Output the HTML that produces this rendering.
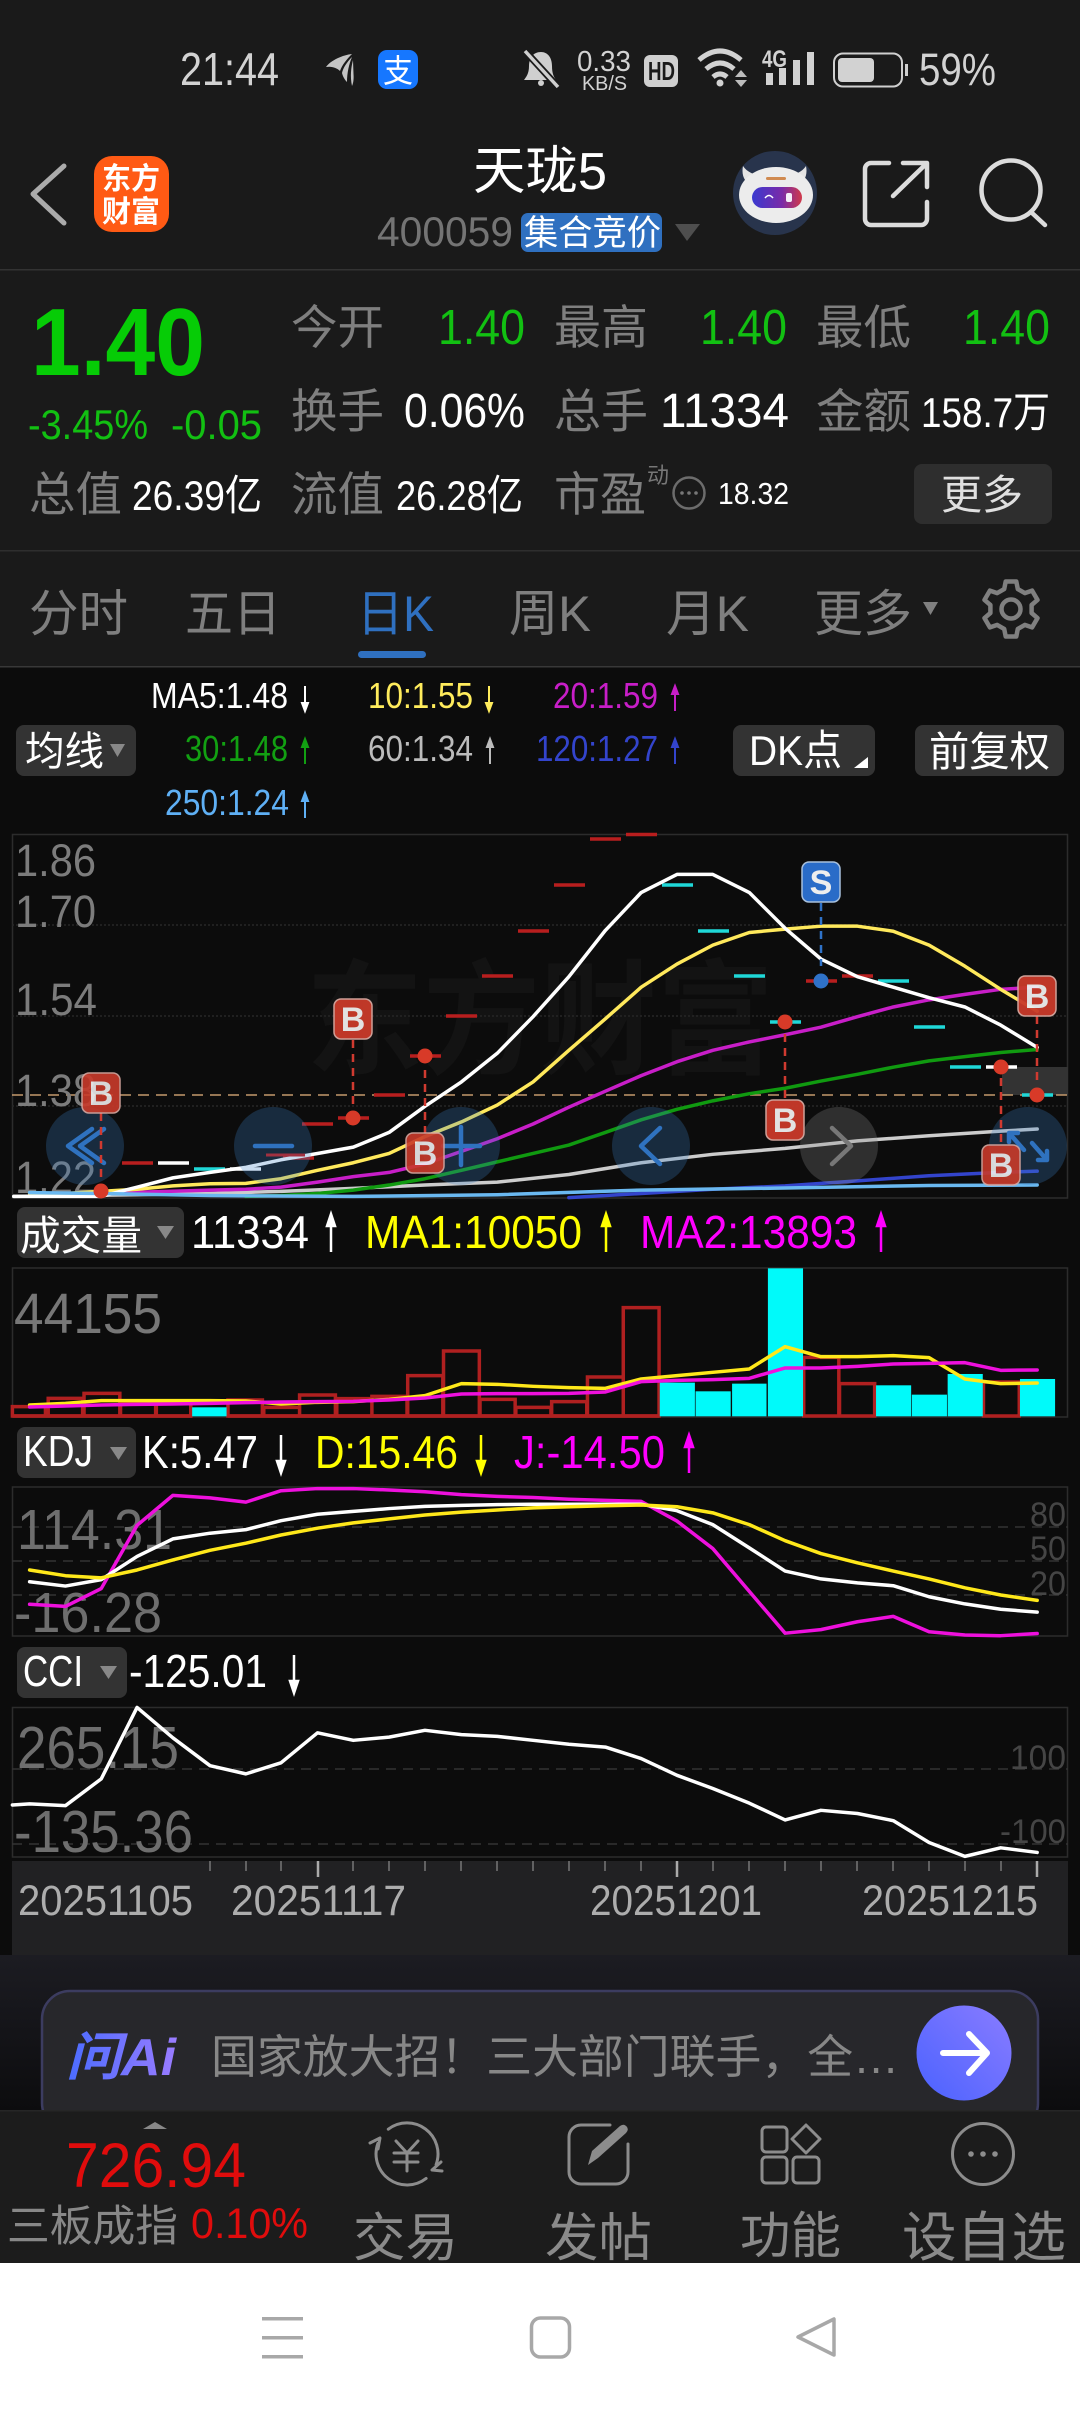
<!DOCTYPE html>
<html><head><meta charset="utf-8"><style>
html,body{margin:0;padding:0;background:#0c0c0c}
svg{display:block}
text{font-family:"Liberation Sans","Noto Sans CJK SC",sans-serif}
.l{fill:none;stroke-linejoin:round;stroke-linecap:round;vector-effect:non-scaling-stroke}
.n{vector-effect:non-scaling-stroke}
.g{fill:#7f7f7f}.w{fill:#fff}.gr{fill:#12c012}.lb{fill:#747474}
.ic{fill:none;stroke-linecap:round;stroke-linejoin:round}
</style></head><body>
<svg xmlns="http://www.w3.org/2000/svg" width="1080" height="2412" viewBox="0 0 1080 2412">
<defs>
<linearGradient id="ai" x1="0" y1="0" x2="0" y2="1"><stop offset="0" stop-color="#1c1c22"/><stop offset="1" stop-color="#0c0c0e"/></linearGradient>
<linearGradient id="vis" x1="0" y1="0" x2="1" y2="0"><stop offset="0" stop-color="#3a3ad0"/><stop offset=".6" stop-color="#7a2aa8"/><stop offset="1" stop-color="#d03a4a"/></linearGradient>
<linearGradient id="aiT" x1="0" y1="0" x2="1" y2="0"><stop offset="0" stop-color="#4a6cff"/><stop offset="1" stop-color="#9a7cff"/></linearGradient>
<linearGradient id="btn" x1="0" y1="1" x2="1" y2="0"><stop offset="0" stop-color="#4a62ff"/><stop offset="1" stop-color="#8a7cff"/></linearGradient>
</defs>
<rect width="1080" height="2412" fill="#0c0c0c"/>
<rect width="1080" height="667" fill="#1a1a1a"/>

<!-- status bar -->
<text x="180" y="85" font-size="46" fill="#d2d2d2" textLength="99" lengthAdjust="spacingAndGlyphs">21:44</text>
<g fill="#c4c4c4">
<path d="M352 54C343 55 331 60 326 67C332 66 337 68 340 71C342 65 347 59 352 54Z"/>
<path d="M352 57C347 62 343 68 342 73C343 77 345 80 347 82C347 73 349 64 352 57Z"/>
<path d="M353 60C351 68 350 76 352 86C353 84 354 80 353.500 74Z"/>
</g>
<rect x="378" y="50" width="40" height="39" rx="9" fill="#1677ff"/>
<text x="383" y="82" font-size="32" fill="#fff" textLength="30" lengthAdjust="spacingAndGlyphs">支</text>
<path d="M541 52c-8 0-12 6-12 14c0 8-3 11-5 14h32c-2-3-4-6-4-14c0-8-4-14-11-14Z" fill="#cfcfcf"/>
<circle cx="541" cy="83" r="3" fill="#cfcfcf"/>
<path d="M526 52L558 87" stroke="#1a1a1a" stroke-width="7"/>
<path d="M525 51L558 87" stroke="#cfcfcf" stroke-width="3.500"/>
<text x="577" y="71" font-size="29" fill="#d2d2d2" textLength="54" lengthAdjust="spacingAndGlyphs">0.33</text>
<text x="582" y="90" font-size="20" fill="#d2d2d2" textLength="45" lengthAdjust="spacingAndGlyphs">KB/S</text>
<rect x="644" y="55" width="34" height="32" rx="6" fill="#cfcfcf"/>
<text x="648" y="80" font-size="26" font-weight="700" fill="#1a1a1a" textLength="27" lengthAdjust="spacingAndGlyphs">HD</text>
<g fill="none" stroke="#d2d2d2" stroke-width="5">
<path d="M699 60Q720 42 741 60"/><path d="M706 69Q720 57 734 69"/><path d="M713 77Q720 71 727 77"/>
</g>
<circle cx="720" cy="83" r="3.500" fill="#d2d2d2"/>
<path d="M735 77h12l-6-7zM735 80h12l-6 7z" fill="#bdbdbd"/>
<text x="762" y="67" font-size="24" font-weight="700" fill="#d2d2d2" textLength="25" lengthAdjust="spacingAndGlyphs">4G</text>
<g fill="#d2d2d2"><rect x="766" y="73" width="7" height="12"/><rect x="779" y="68" width="7" height="17"/><rect x="793" y="60" width="7" height="25"/><rect x="807" y="52" width="7" height="33"/></g>
<rect x="834" y="53.500" width="68" height="33" rx="9" fill="none" stroke="#cfcfcf" stroke-width="2"/>
<rect x="838" y="58" width="36" height="24" rx="4" fill="#d2d2d2"/>
<rect x="905" y="64" width="3" height="12" fill="#cfcfcf"/>
<text x="919" y="85" font-size="45" fill="#d2d2d2" textLength="77" lengthAdjust="spacingAndGlyphs">59%</text>

<!-- header -->
<path d="M64 166L33 194L64 223" class="ic" stroke="#ababab" stroke-width="5"/>
<rect x="94" y="156" width="75" height="76" rx="18" fill="#ff5a14"/>
<text x="102" y="189" font-size="30" font-weight="700" fill="#fff" textLength="58" lengthAdjust="spacingAndGlyphs">东方</text>
<text x="102" y="222" font-size="30" font-weight="700" fill="#fff" textLength="58" lengthAdjust="spacingAndGlyphs">财富</text>
<text x="473" y="189" font-size="52" fill="#fff" textLength="134" lengthAdjust="spacingAndGlyphs">天珑5</text>
<text x="377" y="246" font-size="42" fill="#747474" textLength="136" lengthAdjust="spacingAndGlyphs">400059</text>
<rect x="521" y="213" width="141" height="39" rx="7" fill="#2f70c0"/>
<text x="524" y="245" font-size="35" fill="#fff" textLength="137" lengthAdjust="spacingAndGlyphs">集合竞价</text>
<path d="M675 224H700L687 241Z" fill="#4e4e4e"/>
<circle cx="775" cy="193" r="42" fill="#28344c"/>
<path d="M743 166c-2 10 2 17 10 20l9-10c-8-1-15-4-19-10ZM806 166c2 10-2 17-10 20l-9-10c8-1 15-4 19-10Z" fill="#e4e4e4"/>
<ellipse cx="776" cy="195" rx="37" ry="28" fill="#ececec"/>
<rect x="766" y="177" width="20" height="3" rx="1.500" fill="#d08a50"/>
<rect x="752" y="187" width="50" height="21" rx="10.500" fill="url(#vis)"/>
<path d="M765 198q4-5 8 0" fill="none" stroke="#fff" stroke-width="1.500"/>
<rect x="786" y="193" width="6" height="9" rx="2" fill="#f4eef8"/>
<path d="M889 163H871a6 6 0 0 0-6 6V219a6 6 0 0 0 6 6H921a6 6 0 0 0 6-6V202" class="ic" stroke="#dcdcdc" stroke-width="4.500"/>
<path d="M893 196L926 164M903 163H927V187" class="ic" stroke="#dcdcdc" stroke-width="4.500"/>
<circle cx="1011" cy="190" r="29.500" fill="none" stroke="#dcdcdc" stroke-width="4.500"/>
<path d="M1031 212L1045 225" class="ic" stroke="#dcdcdc" stroke-width="4.500"/>
<rect x="0" y="269" width="1080" height="1.500" fill="#333"/>

<!-- quote -->
<text x="31" y="375" font-size="96" font-weight="700" fill="#06cc06" textLength="174" lengthAdjust="spacingAndGlyphs">1.40</text>
<text x="28" y="439" font-size="42" class="gr" textLength="120" lengthAdjust="spacingAndGlyphs">-3.45%</text>
<text x="171" y="439" font-size="42" class="gr" textLength="91" lengthAdjust="spacingAndGlyphs">-0.05</text>
<g class="g" font-size="47">
<text x="291" y="344" textLength="93" lengthAdjust="spacingAndGlyphs">今开</text>
<text x="554" y="344" textLength="94" lengthAdjust="spacingAndGlyphs">最高</text>
<text x="816" y="344" textLength="95" lengthAdjust="spacingAndGlyphs">最低</text>
<text x="291" y="428" textLength="93" lengthAdjust="spacingAndGlyphs">换手</text>
<text x="554" y="428" textLength="94" lengthAdjust="spacingAndGlyphs">总手</text>
<text x="816" y="428" textLength="95" lengthAdjust="spacingAndGlyphs">金额</text>
<text x="29" y="511" textLength="93" lengthAdjust="spacingAndGlyphs">总值</text>
<text x="291" y="511" textLength="93" lengthAdjust="spacingAndGlyphs">流值</text>
<text x="554" y="511" textLength="92" lengthAdjust="spacingAndGlyphs">市盈</text>
</g>
<g class="gr" font-size="49">
<text x="438" y="344" textLength="87" lengthAdjust="spacingAndGlyphs">1.40</text>
<text x="700" y="344" textLength="87" lengthAdjust="spacingAndGlyphs">1.40</text>
<text x="963" y="344" textLength="87" lengthAdjust="spacingAndGlyphs">1.40</text>
</g>
<g class="w">
<text x="404" y="427" font-size="48" textLength="121" lengthAdjust="spacingAndGlyphs">0.06%</text>
<text x="660" y="427" font-size="48" textLength="129" lengthAdjust="spacingAndGlyphs">11334</text>
<text x="921" y="427" font-size="42" textLength="129" lengthAdjust="spacingAndGlyphs">158.7万</text>
<text x="132" y="510" font-size="42" textLength="130" lengthAdjust="spacingAndGlyphs">26.39亿</text>
<text x="396" y="510" font-size="42" textLength="127" lengthAdjust="spacingAndGlyphs">26.28亿</text>
<text x="718" y="504" font-size="31" textLength="71" lengthAdjust="spacingAndGlyphs">18.32</text>
</g>
<text x="647" y="483" font-size="22" fill="#777" textLength="22" lengthAdjust="spacingAndGlyphs">动</text>
<circle cx="689" cy="493" r="15.500" fill="none" stroke="#6c6c6c" stroke-width="2.500"/>
<g fill="#777"><circle cx="682" cy="493" r="1.800"/><circle cx="689" cy="493" r="1.800"/><circle cx="696" cy="493" r="1.800"/></g>
<rect x="914" y="464" width="138" height="60" rx="8" fill="#2e2e2e"/>
<text x="941" y="509" font-size="41" fill="#e0e0e0" textLength="82" lengthAdjust="spacingAndGlyphs">更多</text>
<rect x="0" y="550" width="1080" height="1.500" fill="#2e2e2e"/>

<!-- tabs -->
<g class="g" font-size="50">
<text x="29" y="631" textLength="99" lengthAdjust="spacingAndGlyphs">分时</text>
<text x="185" y="631" textLength="96" lengthAdjust="spacingAndGlyphs">五日</text>
<text x="509" y="631" textLength="82" lengthAdjust="spacingAndGlyphs">周K</text>
<text x="666" y="631" textLength="83" lengthAdjust="spacingAndGlyphs">月K</text>
<text x="814" y="631" textLength="98" lengthAdjust="spacingAndGlyphs">更多</text>
</g>
<text x="357" y="631" font-size="50" fill="#2f70c0" textLength="77" lengthAdjust="spacingAndGlyphs">日K</text>
<rect x="358" y="651" width="68" height="7" rx="3.500" fill="#2f70c0"/>
<path d="M923 602H938L930.500 615Z" fill="#808080"/>
<g transform="translate(1011 609)">
<polygon points="-6.800,-19.900 -5.300,-27.500 5.300,-27.500 6.800,-19.900 13.800,-15.900 21.100,-18.400 26.500,-9.100 20.600,-4 20.600,4 26.500,9.100 21.100,18.400 13.800,15.900 6.800,19.900 5.300,27.500 -5.300,27.500 -6.800,19.900 -13.800,15.900 -21.100,18.400 -26.500,9.100 -20.600,4 -20.600,-4 -26.500,-9.100 -21.100,-18.400 -13.800,-15.900" fill="none" stroke="#808080" stroke-width="4.500" stroke-linejoin="round"/>
<circle r="9.500" fill="none" stroke="#808080" stroke-width="4.500"/>
</g>
<rect x="0" y="666" width="1080" height="1.500" fill="#383838"/>

<!-- MA legend -->
<g font-size="36">
<text x="151" y="708" fill="#fff" textLength="137" lengthAdjust="spacingAndGlyphs">MA5:1.48</text>
<path d="M305 686V707M302 703L305 711L308 703Z" stroke="#fff" stroke-width="2" fill="#fff"/>
<text x="368" y="708" fill="#ffec5c" textLength="105" lengthAdjust="spacingAndGlyphs">10:1.55</text>
<path d="M489 686V707M486 703L489 711L492 703Z" stroke="#ffec5c" stroke-width="2" fill="#ffec5c"/>
<text x="553" y="708" fill="#c81ec8" textLength="105" lengthAdjust="spacingAndGlyphs">20:1.59</text>
<path d="M675 711V690M672 694L675 686L678 694Z" stroke="#c81ec8" stroke-width="2" fill="#c81ec8"/>
<text x="185" y="761" fill="#12a012" textLength="103" lengthAdjust="spacingAndGlyphs">30:1.48</text>
<path d="M305 764V743M302 747L305 739L308 747Z" stroke="#12a012" stroke-width="2" fill="#12a012"/>
<text x="368" y="761" fill="#bcbcbc" textLength="105" lengthAdjust="spacingAndGlyphs">60:1.34</text>
<path d="M490 764V743M487 747L490 739L493 747Z" stroke="#bcbcbc" stroke-width="2" fill="#bcbcbc"/>
<text x="536" y="761" fill="#3344cc" textLength="122" lengthAdjust="spacingAndGlyphs">120:1.27</text>
<path d="M675 764V743M672 747L675 739L678 747Z" stroke="#3344cc" stroke-width="2" fill="#3344cc"/>
<text x="165" y="815" fill="#5fb0f5" textLength="124" lengthAdjust="spacingAndGlyphs">250:1.24</text>
<path d="M305 818V797M302 801L305 793L308 801Z" stroke="#5fb0f5" stroke-width="2" fill="#5fb0f5"/>
</g>
<rect x="16" y="725" width="120" height="51" rx="8" fill="#333"/>
<text x="25" y="765" font-size="40" fill="#fff" textLength="79" lengthAdjust="spacingAndGlyphs">均线</text>
<path d="M110 744H125L117.500 757Z" fill="#888"/>
<rect x="733" y="725" width="142" height="51" rx="8" fill="#333"/>
<text x="749" y="765" font-size="42" fill="#fff" textLength="93" lengthAdjust="spacingAndGlyphs">DK点</text>
<path d="M868 757V768H854Z" fill="#fff"/>
<rect x="915" y="725" width="149" height="51" rx="8" fill="#333"/>
<text x="929" y="766" font-size="41" fill="#fff" textLength="121" lengthAdjust="spacingAndGlyphs">前复权</text>

<!-- main chart -->
<rect x="12.500" y="834.500" width="1055" height="363.500" fill="#0c0c0c" stroke="#2c2c2c" stroke-width="1.500"/>
<text x="306" y="1064" font-size="124" font-weight="700" fill="#131313" textLength="468" lengthAdjust="spacingAndGlyphs">东方财富</text>
<g stroke="#262626" stroke-width="1.500" stroke-dasharray="2 2"><path d="M12 925H1068M12 1016H1068M12 1106H1068"/></g>
<rect x="1002" y="1067" width="66" height="28" fill="#333"/>
<path d="M12 1095H1068" stroke="#c49a6c" stroke-width="1.500" stroke-dasharray="11 7"/>
<g fill="#7c7c7c" font-size="45">
<text x="15" y="876" textLength="81" lengthAdjust="spacingAndGlyphs">1.86</text>
<text x="15" y="927" textLength="81" lengthAdjust="spacingAndGlyphs">1.70</text>
<text x="15" y="1015" textLength="82" lengthAdjust="spacingAndGlyphs">1.54</text>
<text x="15" y="1106" textLength="81" lengthAdjust="spacingAndGlyphs">1.38</text>
<text x="15" y="1193" textLength="81" lengthAdjust="spacingAndGlyphs">1.22</text>
</g>
<!-- price dashes -->
<g stroke-width="3.500">
<g stroke="#b81e1e"><path d="M122 1163h31M283 1158h31M302 1124h31M338 1118h31M374 1095h31M446 1016h31M482 976h31M518 931h31M554 885h31M590 839h31M626 834.500h31M806 981h31M842 976h31M410 1056h31"/></g>
<g stroke="#fff"><path d="M158 1163h31M230 1169h31M986 1067h31"/></g>
<g stroke="#1fd8d8"><path d="M194 1169h31M662 885h31M698 931h31M734 976h31M770 1022h31M878 981h31M914 1027h31M950 1067h31M1022 1095h31"/></g>
</g>
<g transform="translate(0,560) scale(.6887,.4209)" stroke-width="3.500" class="l">
<polyline class="l" stroke="#ccc" points="20,1512 199,1508 305,1505 408,1500 513,1493 617,1485 722,1478 826,1460 931,1432 1035,1412 1140,1398 1245,1380 1349,1368 1453,1357 1506,1352"/>
<polyline class="l" stroke="#109a10" points="357,1512 408,1510 461,1505 513,1497 565,1485 617,1470 670,1450 722,1430 774,1410 826,1390 879,1360 931,1330 983,1305 1035,1285 1088,1268 1140,1255 1192,1238 1245,1222 1297,1205 1349,1190 1401,1180 1453,1170 1506,1163"/>
<polyline class="l" stroke="#c81ec8" points="43,1510 199,1502 305,1497 357,1495 408,1490 461,1478 513,1465 565,1455 617,1435 670,1405 722,1375 774,1340 826,1300 879,1262 931,1225 983,1192 1035,1165 1088,1145 1140,1128 1192,1110 1245,1085 1297,1062 1349,1045 1401,1032 1453,1020 1506,1015"/>
<polyline class="l" stroke="#ffe95c" points="43,1505 95,1505 147,1500 199,1495 251,1487 305,1482 357,1481 408,1470 461,1450 513,1432 565,1410 617,1370 670,1335 722,1295 774,1240 826,1165 879,1090 931,1015 983,960 1035,915 1088,885 1140,877 1192,870 1245,870 1297,882 1349,915 1401,965 1453,1020 1506,1072"/>
<polyline class="l" stroke="#fff" points="20,1512 147,1512 199,1490 251,1468 305,1455 357,1443 408,1425 461,1410 513,1395 565,1360 617,1298 670,1240 722,1172 774,1085 826,990 879,880 931,790 983,747 1035,747 1088,790 1140,875 1192,948 1245,990 1297,1015 1349,1040 1401,1062 1453,1105 1506,1158"/>
<polyline class="l" stroke="#3344cc" points="826,1515 931,1505 1035,1495 1140,1487 1245,1475 1349,1463 1453,1455 1506,1452"/>
<polyline class="l" stroke="#6ab8f0" points="43,1503 147,1505 305,1510 513,1512 722,1508 931,1497 1140,1492 1349,1486 1506,1485"/>
</g>
<!-- overlay circles -->
<g fill="rgba(60,130,200,.27)"><circle cx="85" cy="1146" r="39"/><circle cx="273" cy="1146" r="39"/><circle cx="461" cy="1146" r="39"/><circle cx="651" cy="1146" r="39"/><circle cx="1028" cy="1146" r="39"/></g>
<circle cx="839" cy="1146" r="39" fill="rgba(140,140,140,.28)"/>
<g class="ic" stroke="#2f72bf" stroke-width="4.500">
<path d="M92 1129L68 1146L92 1163M104 1129L80 1146L104 1163"/>
<path d="M255 1146H292"/>
<path d="M443 1146H480M461 1127V1165"/>
<path d="M660 1128L641 1146L660 1164"/>
<path d="M1009 1133L1024 1150M1009 1133H1018M1009 1133V1142M1047 1160L1032 1143M1047 1160H1038M1047 1160V1151"/>
</g>
<path d="M832 1128L851 1146L832 1164" class="ic" stroke="#777" stroke-width="4.500"/>
<path d="M266 1155H305" stroke="#a03040" stroke-width="3"/>
<!-- BS markers lines & dots -->
<g stroke="#d03a30" stroke-width="2.500" stroke-dasharray="8 6" fill="none">
<path d="M101 1113V1180"/><path d="M353 1040V1104"/><path d="M425 1070V1133"/><path d="M785 1034V1100"/><path d="M1037 1016V1085"/><path d="M1001 1078V1145"/>
</g>
<path d="M821 903V966" stroke="#2f72c8" stroke-width="2.500" stroke-dasharray="8 6"/>
<g fill="#d83a28"><circle cx="101" cy="1191" r="7.500"/><circle cx="353" cy="1118" r="7.500"/><circle cx="425" cy="1056" r="7.500"/><circle cx="785" cy="1022" r="7.500"/><circle cx="1037" cy="1095" r="7.500"/><circle cx="1001" cy="1067" r="7.500"/></g>
<circle cx="821" cy="981" r="7.500" fill="#2f72c8"/>
<g font-size="34" font-weight="700" text-anchor="middle">
<g opacity=".9"><rect x="82" y="1073" width="38" height="40" rx="7" fill="#c93a2a" stroke="#d9a8a0" stroke-width="1.500"/><text x="101" y="1105" fill="#eee">B</text></g>
<g opacity=".95"><rect x="334" y="999" width="38" height="40" rx="7" fill="#c93a2a" stroke="#d9a8a0" stroke-width="1.500"/><text x="353" y="1031" fill="#eee">B</text></g>
<g opacity=".9"><rect x="406" y="1133" width="38" height="40" rx="7" fill="#c93a2a" stroke="#d9a8a0" stroke-width="1.500"/><text x="425" y="1165" fill="#eee">B</text></g>
<g opacity=".95"><rect x="766" y="1100" width="38" height="40" rx="7" fill="#c93a2a" stroke="#d9a8a0" stroke-width="1.500"/><text x="785" y="1132" fill="#eee">B</text></g>
<g opacity=".95"><rect x="1018" y="976" width="38" height="40" rx="7" fill="#c93a2a" stroke="#d9a8a0" stroke-width="1.500"/><text x="1037" y="1008" fill="#eee">B</text></g>
<g opacity=".9"><rect x="982" y="1145" width="38" height="40" rx="7" fill="#c93a2a" stroke="#d9a8a0" stroke-width="1.500"/><text x="1001" y="1177" fill="#eee">B</text></g>
<g><rect x="802" y="862" width="38" height="40" rx="7" fill="#2a6cc8" stroke="#a8c0dc" stroke-width="1.500"/><text x="821" y="894" fill="#eee">S</text></g>
</g>

<!-- volume -->
<rect x="17" y="1207" width="167" height="51" rx="8" fill="#333"/>
<text x="20" y="1250" font-size="41" fill="#fff" textLength="122" lengthAdjust="spacingAndGlyphs">成交量</text>
<path d="M157 1226H174L165.500 1239Z" fill="#888"/>
<g font-size="46">
<text x="191" y="1248" fill="#fff" textLength="118" lengthAdjust="spacingAndGlyphs">11334</text>
<text x="365" y="1248" fill="#ffff00" textLength="217" lengthAdjust="spacingAndGlyphs">MA1:10050</text>
<text x="640" y="1248" fill="#ff00ff" textLength="217" lengthAdjust="spacingAndGlyphs">MA2:13893</text>
</g>
<path d="M331 1252V1222M327 1226L331 1214L335 1226Z" stroke="#fff" stroke-width="2.500" fill="#fff"/>
<path d="M606 1252V1222M602 1226L606 1214L610 1226Z" stroke="#ffff00" stroke-width="2.500" fill="#ffff00"/>
<path d="M881 1252V1222M877 1226L881 1214L885 1226Z" stroke="#ff00ff" stroke-width="2.500" fill="#ff00ff"/>
<rect x="12.500" y="1268" width="1055" height="149" fill="#0c0c0c" stroke="#2c2c2c" stroke-width="1.500"/>
<text x="14" y="1333" font-size="57" fill="#777" textLength="148" lengthAdjust="spacingAndGlyphs">44155</text>
<g transform="translate(0,1200) scale(.6887,.3333)">
<g fill="none" stroke="#b02020" stroke-width="3.500" class="n">
<path class="n" d="M18 648V620H66V648ZM70 648V595H120V648ZM122 648V580H174V648ZM175 648V605H226V648ZM227 648V605H277V648ZM331 648V600H381V648ZM383 648V622H435V648ZM435 648V585H487V648ZM489 648V596H540V648ZM540 648V589H591V648ZM592 648V527H643V648ZM644 648V453H696V648ZM697 648V598H748V648ZM749 648V622H800V648ZM801 648V605H852V648ZM853 648V531H905V648ZM905 648V323H957V648ZM1167 648V472H1218V648ZM1219 648V551H1270V648ZM1428 648V546H1480V648Z"/>
<path class="n" d="M18 648H279M331 648H957"/>
</g>
<g fill="#00fafa">
<rect x="279" y="622" width="50" height="27"/><rect x="958" y="548" width="51" height="101"/><rect x="1010" y="574" width="51" height="75"/><rect x="1063" y="551" width="50" height="98"/><rect x="1115" y="205" width="51" height="444"/><rect x="1272" y="556" width="51" height="93"/><rect x="1324" y="584" width="51" height="65"/><rect x="1376" y="522" width="51" height="127"/><rect x="1481" y="537" width="51" height="112"/>
</g>
<polyline class="l" stroke="#ffe81a" stroke-width="3.500" points="43,615 95,610 147,602 305,602 357,603 408,612 461,607 513,605 565,598 617,587 670,551 722,553 774,559 826,563 879,565 931,537 983,527 1035,517 1088,507 1140,440 1192,470 1245,470 1297,467 1349,473 1401,537 1453,551 1506,549"/>
<polyline class="l" stroke="#ee10dd" stroke-width="3.500" points="43,621 95,618 147,615 199,613 251,612 305,610 357,608 408,606 461,605 513,604 565,600 617,594 670,582 722,581 774,581 826,580 879,576 931,545 983,541 1035,539 1088,535 1140,504 1192,504 1245,499 1297,492 1349,490 1401,488 1453,511 1506,510"/>
</g>

<!-- KDJ -->
<rect x="17" y="1427" width="119" height="51" rx="8" fill="#333"/>
<text x="23" y="1466" font-size="44" fill="#fff" textLength="70" lengthAdjust="spacingAndGlyphs">KDJ</text>
<path d="M110 1447H127L118.500 1460Z" fill="#888"/>
<g font-size="46">
<text x="142" y="1468" fill="#fff" textLength="116" lengthAdjust="spacingAndGlyphs">K:5.47</text>
<text x="315" y="1468" fill="#ffff00" textLength="143" lengthAdjust="spacingAndGlyphs">D:15.46</text>
<text x="514" y="1468" fill="#ff00ff" textLength="151" lengthAdjust="spacingAndGlyphs">J:-14.50</text>
</g>
<path d="M281 1435V1465M277 1461L281 1473L285 1461Z" stroke="#fff" stroke-width="2.500" fill="#fff"/>
<path d="M481 1435V1465M477 1461L481 1473L485 1461Z" stroke="#ffff00" stroke-width="2.500" fill="#ffff00"/>
<path d="M689 1473V1443M685 1447L689 1435L693 1447Z" stroke="#ff00ff" stroke-width="2.500" fill="#ff00ff"/>
<rect x="12.500" y="1487" width="1055" height="149" fill="#0c0c0c" stroke="#2c2c2c" stroke-width="1.500"/>
<g stroke="#333" stroke-width="1.500" stroke-dasharray="10 7"><path d="M12 1527H1068M12 1561H1068M12 1595H1068"/></g>
<g fill="#6e6e6e" font-size="57">
<text x="17" y="1549" textLength="155" lengthAdjust="spacingAndGlyphs">114.31</text>
<text x="14" y="1632" textLength="148" lengthAdjust="spacingAndGlyphs">-16.28</text>
</g>
<g fill="#454545" font-size="34">
<text x="1030" y="1526" textLength="36" lengthAdjust="spacingAndGlyphs">80</text>
<text x="1030" y="1560" textLength="36" lengthAdjust="spacingAndGlyphs">50</text>
<text x="1030" y="1595" textLength="36" lengthAdjust="spacingAndGlyphs">20</text>
</g>
<g transform="translate(0,1420) scale(.6887,.3571)">
<polyline class="l" stroke="#ee10dd" stroke-width="3.500" points="43,516 95,522 147,472 199,295 251,211 305,218 357,230 408,198 461,192 513,192 565,196 617,201 670,209 722,214 774,217 826,222 879,225 931,228 983,283 1035,360 1088,480 1140,597 1192,587 1245,565 1297,550 1349,593 1401,602 1453,604 1506,598"/>
<polyline class="l" stroke="#fff" stroke-width="3.500" points="43,453 95,465 147,447 199,382 251,333 305,317 357,307 408,282 461,264 513,256 565,248 617,242 670,239 722,237 774,236 826,236 879,236 931,236 983,254 1035,293 1088,358 1140,423 1192,445 1245,456 1297,464 1349,495 1401,515 1453,530 1506,538"/>
<polyline class="l" stroke="#ffe81a" stroke-width="3.500" points="43,420 95,436 147,442 199,420 251,392 305,365 357,345 408,322 461,303 513,288 565,277 617,266 670,258 722,252 774,246 826,243 879,240 931,238 983,243 1035,260 1088,293 1140,338 1192,374 1245,400 1297,423 1349,445 1401,470 1453,490 1506,505"/>
</g>

<!-- CCI -->
<rect x="17" y="1647" width="110" height="51" rx="8" fill="#333"/>
<text x="23" y="1686" font-size="44" fill="#fff" textLength="60" lengthAdjust="spacingAndGlyphs">CCI</text>
<path d="M100 1666H117L108.500 1679Z" fill="#888"/>
<text x="129" y="1687" font-size="46" fill="#fff" textLength="138" lengthAdjust="spacingAndGlyphs">-125.01</text>
<path d="M294 1655V1685M290 1681L294 1693L298 1681Z" stroke="#fff" stroke-width="2.500" fill="#fff"/>
<rect x="12.500" y="1707.500" width="1055" height="149.500" fill="#0c0c0c" stroke="#2c2c2c" stroke-width="1.500"/>
<g stroke="#333" stroke-width="1.500" stroke-dasharray="10 7"><path d="M12 1769H1068M12 1844H1068"/></g>
<g fill="#6e6e6e" font-size="59">
<text x="17" y="1768" textLength="162" lengthAdjust="spacingAndGlyphs">265.15</text>
<text x="14" y="1852" textLength="179" lengthAdjust="spacingAndGlyphs">-135.36</text>
</g>
<g fill="#454545" font-size="34">
<text x="1010" y="1769" textLength="56" lengthAdjust="spacingAndGlyphs">100</text>
<text x="1000" y="1843" textLength="66" lengthAdjust="spacingAndGlyphs">-100</text>
</g>
<g transform="translate(0,1420) scale(.6887,.3571)">
<polyline class="l" stroke="#fff" stroke-width="3.500" points="18,1078 43,1075 95,1080 147,1005 199,805 251,890 305,968 357,991 408,960 461,876 513,897 565,888 617,869 670,881 722,886 774,897 826,908 879,916 931,948 983,995 1035,1032 1088,1073 1140,1120 1192,1093 1245,1102 1297,1122 1349,1183 1401,1222 1453,1198 1506,1211"/>
</g>

<!-- x axis -->
<rect x="12" y="1861" width="1056" height="94" fill="#212123"/>
<g stroke="#777" stroke-width="1.500">
<path d="M210 1861v10M246 1861v10M281 1861v10M353 1861v10M389 1861v10M425 1861v10M461 1861v10M497 1861v10M533 1861v10M569 1861v10M605 1861v10M641 1861v10M713 1861v10M749 1861v10M785 1861v10M821 1861v10M857 1861v10M893 1861v10M929 1861v10M965 1861v10M1001 1861v10"/>
</g>
<g stroke="#aaa" stroke-width="2.500"><path d="M318 1861v16M677 1861v16M1037 1861v16"/></g>
<g fill="#adadad" font-size="43">
<text x="18" y="1915" textLength="175" lengthAdjust="spacingAndGlyphs">20251105</text>
<text x="231" y="1915" textLength="175" lengthAdjust="spacingAndGlyphs">20251117</text>
<text x="590" y="1915" textLength="172" lengthAdjust="spacingAndGlyphs">20251201</text>
<text x="862" y="1915" textLength="176" lengthAdjust="spacingAndGlyphs">20251215</text>
</g>

<!-- AI bar -->
<rect x="0" y="1955" width="1080" height="157" fill="url(#ai)"/>
<rect x="42" y="1991" width="996" height="140" rx="28" fill="#27272b" stroke="#3c3c60" stroke-width="2.500"/>
<text x="66" y="2075" font-size="52" font-weight="700" font-style="italic" fill="url(#aiT)" textLength="110" lengthAdjust="spacingAndGlyphs">问Ai</text>
<text x="211" y="2073" font-size="46" fill="#878787" textLength="688" lengthAdjust="spacingAndGlyphs">国家放大招！三大部门联手，全…</text>
<circle cx="964" cy="2053" r="47.500" fill="url(#btn)"/>
<path d="M943 2053H987M969 2034L987 2053L969 2073" class="ic" stroke="#fff" stroke-width="6"/>

<!-- bottom nav -->
<rect x="0" y="2110" width="1080" height="153" fill="#1c1c1c"/>
<rect x="0" y="2110" width="1080" height="1.500" fill="#262626"/>
<path d="M143 2129H167L155 2122Z" fill="#888"/>
<text x="66" y="2187" font-size="63" fill="#e00c0c" textLength="180" lengthAdjust="spacingAndGlyphs">726.94</text>
<text x="7" y="2241" font-size="43" fill="#888" textLength="171" lengthAdjust="spacingAndGlyphs">三板成指</text>
<text x="191" y="2238" font-size="43" fill="#e00c0c" textLength="117" lengthAdjust="spacingAndGlyphs">0.10%</text>
<!-- exchange icon -->
<g class="ic" stroke="#8c8c8c" stroke-width="3">
<path d="M388.300 2129.200A31 31 0 0 1 436.100 2164.600"/>
<path d="M426.100 2178.400A31 31 0 0 1 377.900 2143.400"/>
<path d="M370 2143L380 2138L378 2149M441 2162L432 2170L442 2171"/>
<path d="M396 2141L407 2153L418 2141M394 2153H418M394 2162H418M407 2153V2171"/>
</g>
<!-- post icon -->
<path d="M610 2125H581A12 12 0 0 0 569 2137V2172A12 12 0 0 0 581 2184H616A12 12 0 0 0 628 2172V2144" class="ic" stroke="#8c8c8c" stroke-width="3"/>
<path d="M588 2165L592 2151L620 2126Q624 2123 627 2127Q629 2130 626 2133L598 2158Z" fill="#8c8c8c"/>
<!-- func icon -->
<g fill="none" stroke="#8c8c8c" stroke-width="3">
<rect x="762" y="2127" width="25" height="25" rx="4"/>
<rect x="762" y="2157" width="25" height="26" rx="4"/>
<rect x="793" y="2157" width="26" height="26" rx="4"/>
<path d="M806 2125L820 2139L806 2153L792 2139Z" stroke-linejoin="round"/>
</g>
<circle cx="983" cy="2154" r="30.500" fill="none" stroke="#8c8c8c" stroke-width="3"/>
<g fill="#8c8c8c"><circle cx="971" cy="2154" r="2.800"/><circle cx="983" cy="2154" r="2.800"/><circle cx="995" cy="2154" r="2.800"/></g>
<g fill="#8a8a8a">
<text x="353" y="2256" font-size="52" textLength="105" lengthAdjust="spacingAndGlyphs">交易</text>
<text x="545" y="2256" font-size="52" textLength="107" lengthAdjust="spacingAndGlyphs">发帖</text>
<text x="740" y="2253" font-size="50" textLength="101" lengthAdjust="spacingAndGlyphs">功能</text>
<text x="902" y="2256" font-size="54" textLength="164" lengthAdjust="spacingAndGlyphs">设自选</text>
</g>

<!-- system nav -->
<rect x="0" y="2263" width="1080" height="149" fill="#fff"/>
<g fill="#a8a8a8"><rect x="262" y="2317" width="41" height="3.500"/><rect x="262" y="2336" width="41" height="3.500"/><rect x="262" y="2355" width="41" height="3.500"/></g>
<rect x="531.500" y="2318" width="38" height="39" rx="9" fill="none" stroke="#a8a8a8" stroke-width="3.500"/>
<path d="M834 2319V2355L798 2337Z" fill="none" stroke="#a8a8a8" stroke-width="3.500" stroke-linejoin="round"/>
</svg>
</body></html>
